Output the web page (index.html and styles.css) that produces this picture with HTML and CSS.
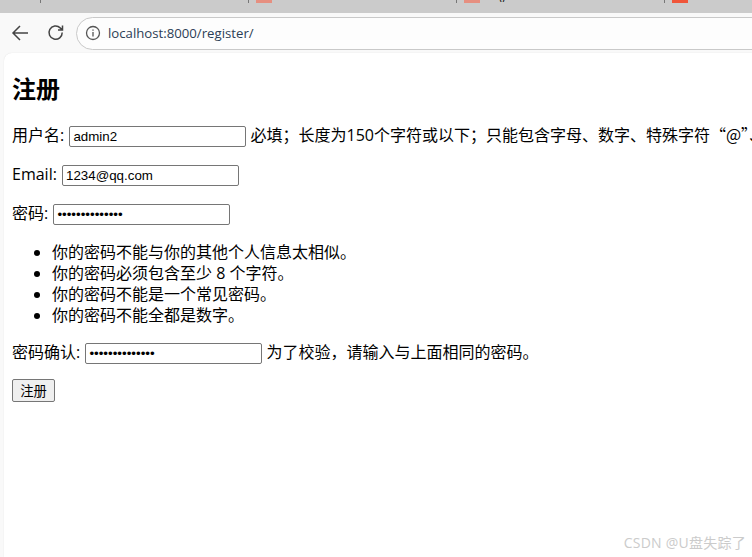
FILE: index.html
```html
<!DOCTYPE html>
<html lang="zh-CN">
<head>
<meta charset="utf-8">
<title>注册</title>
<link rel="stylesheet" href="styles.css">
</head>
<body>
<div class="tabstrip">
  <div class="tab tab-first"></div>
  <div class="tab"></div>
  <div class="tab"><span class="favicon faded"></span></div>
  <div class="tab"><span class="favicon faded"></span><span class="tabtext">"y"</span></div>
  <div class="tab"><span class="favicon solid"></span></div>
</div>
<div class="toolbar">
  <svg class="nav-icon back" width="20" height="20" viewBox="0 0 20 20"><path d="M18 10H3M10 3l-7 7 7 7" fill="none" stroke="#444" stroke-width="1.5"/></svg>
  <svg class="nav-icon reload" width="20" height="20" viewBox="0 0 20 20"><path d="M16.2 9.500a6.600 6.600 0 1 1-2-4.600L16.500 7M16.500 2.500V7H12" fill="none" stroke="#444" stroke-width="1.500"/></svg>
  <div class="omnibox">
    <svg class="info" width="16" height="16" viewBox="0 0 16 16"><circle cx="8" cy="8" r="6.500" fill="none" stroke="#555" stroke-width="1.300"/><path d="M8 7v4.500M8 4.500v1.300" fill="none" stroke="#555" stroke-width="1.300"/></svg>
    <span class="url">localhost:8000/register/</span>
  </div>
</div>
<main class="page">
  <h1>注册</h1>
  <form>
    <p>用户名: <input class="field field-user" type="text" value="admin2"> <span class="help">必填；长度为150个字符或以下；只能包含字母、数字、特殊字符<span class="cjk">“@”、“.”、“-”和“_”。</span></span></p>
    <p>Email: <input class="field" type="text" value="1234@qq.com"></p>
    <p>密码: <input class="field" type="password" value="12345678901234"></p>
    <ul>
      <li>你的密码不能与你的其他个人信息太相似。</li>
      <li>你的密码必须包含至少 8 个字符。</li>
      <li>你的密码不能是一个常见密码。</li>
      <li>你的密码不能全都是数字。</li>
    </ul>
    <p>密码确认: <input class="field" type="password" value="12345678901234"> <span class="help">为了校验，请输入与上面相同的密码。</span></p>
    <button class="submit" type="button">注册</button>
  </form>
  <div class="watermark">CSDN @U盘失踪了</div>
</main>
</body>
</html>
```
FILE: styles.css
```css
html, body {
  margin: 0;
  height: 100%;
  overflow: hidden;
}
body {
  display: flex;
  flex-direction: column;
  background: #f9f9f9;
  font-family: "Open Sans", "Noto Sans CJK SC", sans-serif;
  color: #000;
}
.tabstrip {
  display: flex;
  flex: none;
  height: 13px;
  background: #cbcbcb;
}
.tab {
  flex: none;
  display: flex;
  align-items: flex-start;
  gap: 12px;
  box-sizing: border-box;
  width: 208px;
  height: 13px;
  padding-left: 7px;
  position: relative;
}
.tab-first { width: 41px; padding: 0; }
.tab::after {
  content: "";
  position: absolute;
  right: 0;
  top: 0;
  width: 1px;
  height: 3px;
  background: #777;
}
.favicon { width: 16px; height: 3px; }
.faded { background: #e68f80; }
.solid { background: #f0563a; }
.tabtext {
  font: 12px/2px "Noto Sans", sans-serif;
  color: #222;
  height: 2px;
  overflow: hidden;
  letter-spacing: 2px;
}
.toolbar {
  flex: none;
  display: flex;
  align-items: center;
  box-sizing: border-box;
  height: 40px;
  padding-left: 10px;
}
.nav-icon { flex: none; }
.back { margin-right: 16px; }
.reload { margin-right: 10px; }
.omnibox {
  flex: none;
  display: flex;
  align-items: center;
  box-sizing: border-box;
  width: 720px;
  height: 33px;
  padding-left: 8px;
  border: 1px solid #c9c9c9;
  border-bottom-width: 1.500px;
  border-radius: 17px;
  background: #fdfdfd;
}
.info { flex: none; margin-right: 7px; }
.url {
  font: 13.200px "Open Sans", sans-serif;
  color: #2c3e55;
}
.page {
  flex: 1;
  position: relative;
  margin-left: 4px;
  padding: 6px 8px 8px;
  background: #fff;
  border-top-left-radius: 8px;
  box-shadow: 0 0 1px #d8d8d8;
  white-space: nowrap;
  font-size: 16px;
  line-height: 21px;
}
h1 {
  margin: 14px 0 19px;
  font-size: 24px;
  line-height: 32px;
  font-weight: 700;
}
p {
  margin: 16px 0 17px;
  line-height: 21px;
}
ul {
  margin: 17px 0 16px;
  padding-left: 40px;
}
.cjk {
  font-family: "Noto Sans CJK SC", sans-serif;
}
.field {
  box-sizing: border-box;
  width: 177px;
  height: 21px;
  margin: 0 0 0 1px;
  padding: 1px 3px;
  border: 1px solid #767676;
  border-radius: 2px;
  font: 13.333px "Liberation Sans", sans-serif;
  vertical-align: baseline;
}
.submit {
  display: block;
  box-sizing: border-box;
  width: 43px;
  height: 23px;
  margin-top: -2px;
  padding: 0;
  border: 1px solid #767676;
  border-radius: 2px;
  background: #efefef;
  color: #000;
  font: 13.333px "Noto Sans CJK SC", sans-serif;
}
.watermark {
  position: absolute;
  right: 6px;
  bottom: 4px;
  font-size: 14px;
  line-height: 20px;
  letter-spacing: 0.25px;
  color: #cbcbcb;
}
```
